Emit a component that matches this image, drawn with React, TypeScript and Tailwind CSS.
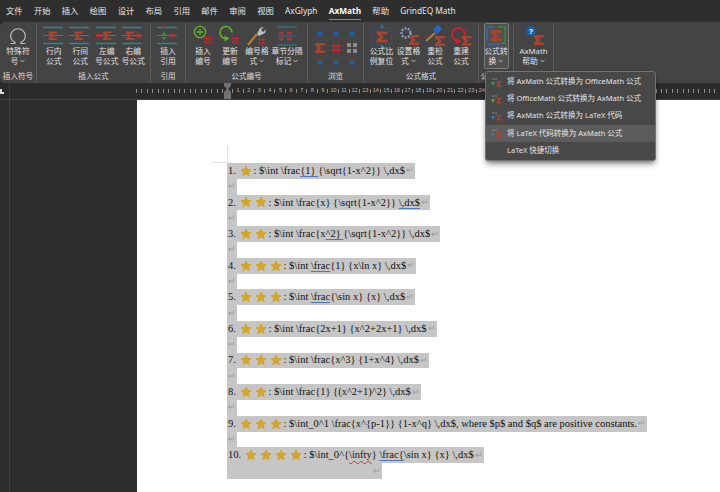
// AxMath ribbon in Word (dark theme) over a page of LaTeX exercise lines.
import type { ReactNode } from "react";

const cjk = "font-['Noto_Sans','Noto_Sans_CJK_SC',sans-serif]";

const tabs = ["文件", "开始", "插入", "绘图", "设计", "布局", "引用", "邮件", "审阅", "视图", "AxGlyph", "AxMath", "帮助", "GrindEQ Math"];

const Sigma = ({ x = 0, y = 0, s = 1, c = "#a8442f" }: { x?: number; y?: number; s?: number; c?: string }) => (
  <path
    transform={`translate(${x} ${y}) scale(${s})`}
    d="M0 0h10v2.4H4.2l2.6 2.6-2.6 2.6H10V10H0V8l3-3-3-3z"
    fill={c}
  />
);

const Hash = ({ x = 0, y = 0, s = 1, c = "#c8242c" }: { x?: number; y?: number; s?: number; c?: string }) => (
  <path
    transform={`translate(${x} ${y}) scale(${s})`}
    d="M3 0v10M7 0v10M0 3h10M0 7h10"
    stroke={c}
    strokeWidth="1.3"
    fill="none"
  />
);

const Frame = ({ children }: { children: ReactNode }) => (
  <svg width="24" height="26" viewBox="0 0 24 26" className="shrink-0">
    {children}
  </svg>
);

const Bars = () => (
  <>
    <path d="M1 3.5h20M1 19.5h20" stroke="#2b8596" strokeWidth="1.3" />
    <path d="M1 11.5h20" stroke="#3f8d9b" strokeWidth="0.8" />
  </>
);

const InlineIcon = () => (
  <Frame>
    <Bars />
    <Sigma x={6.5} y={7.5} s={0.85} />
  </Frame>
);
const LeftIcon = () => (
  <Frame>
    <Bars />
    <Hash x={1} y={8.5} s={0.6} />
    <Sigma x={8} y={7.5} s={0.85} />
  </Frame>
);
const RightIcon = () => (
  <Frame>
    <Bars />
    <Sigma x={5} y={7.5} s={0.85} />
    <Hash x={14.5} y={8.5} s={0.6} />
  </Frame>
);
const CiteIcon = () => (
  <Frame>
    <Bars />
    <path d="M5 11.5l3-4 3 4z" fill="#3f8a3a" />
    <path d="M5 13l3 3 3-3z" fill="#4b7f3a" />
    <circle cx="8" cy="2.6" r="1.4" fill="#b22b2b" />
    <Hash x={14} y={9} s={0.55} />
  </Frame>
);
const AddNoIcon = () => (
  <Frame>
    <circle cx="9" cy="8" r="5.6" fill="none" stroke="#5fb22d" strokeWidth="1.4" />
    <path d="M9 5v6M6 8h6" stroke="#5fb22d" strokeWidth="1.3" />
    <Hash x={13} y={12} s={0.85} />
  </Frame>
);
const UpdateNoIcon = () => (
  <Frame>
    <path d="M14 8.5a6 6 0 1 0-5.5 6" fill="none" stroke="#5fb22d" strokeWidth="1.6" />
    <path d="M6.5 11.5l5 3-5 3z" fill="#5fb22d" />
    <Hash x={13} y={12} s={0.85} />
  </Frame>
);
const WrenchIcon = () => (
  <Frame>
    <path d="M3 21L12 10" stroke="#b27a36" strokeWidth="2.4" />
    <path d="M12 10l3-6 4-1-3 3 2 2 3-3-1 4-6 3z" fill="#b9bec4" />
    <Hash x={12} y={13} s={0.85} />
  </Frame>
);
const ChapterIcon = () => (
  <Frame>
    <path d="M2 3h20M2 21h20" stroke="#2b8596" strokeWidth="1.2" />
    <path d="M4 7.5h5v3H4zM12 7.5h5v3h-5zM4 13.5h5v3H4zM12 13.5h5v3h-5z" fill="#a8323a" />
    <path d="M2 12h20" stroke="#2b8596" strokeWidth="0.7" />
  </Frame>
);
const ResetIcon = () => (
  <Frame>
    <path d="M2.5 4.5h19v16h-19z" fill="none" stroke="#2c5f8e" strokeWidth="0.8" strokeDasharray="2 2" />
    <path d="M12 0.5l2 3h-4zM12 24.5l-2-3h4z" fill="#2e78c4" />
    <Sigma x={6.5} y={7.5} s={1.1} />
  </Frame>
);
const GearIcon = () => (
  <Frame>
    <circle cx="9" cy="9" r="4.5" fill="none" stroke="#8aa3c4" strokeWidth="2.4" strokeDasharray="1.8 1.4" />
    <Sigma x={12} y={11} s={1} />
  </Frame>
);
const CheckIcon = () => (
  <Frame>
    <path d="M3 17L12 9" stroke="#b27a36" strokeWidth="2.2" />
    <path d="M10 6l5-5 4 4-5 5z" fill="#1f66d6" />
    <Sigma x={12} y={12} s={1} />
  </Frame>
);
const RebuildIcon = () => (
  <Frame>
    <path d="M16 11a6.5 6.5 0 1 0-6.5 6" fill="none" stroke="#d0232b" strokeWidth="1.8" />
    <path d="M6.5 14l6 3-6 3.5z" fill="#d0232b" />
    <Sigma x={13} y={12} s={0.95} />
  </Frame>
);
const ConvertIcon = () => (
  <Frame>
    <path d="M4 3h6M3 3v14" stroke="#2d6fb5" strokeWidth="1.4" fill="none" />
    <path d="M14 3h7v16h-4" stroke="#3d8a3a" strokeWidth="1.4" fill="none" />
    <path d="M4 20h12" stroke="#2d6fb5" strokeWidth="1.4" />
    <Sigma x={6.5} y={6} s={1.1} />
  </Frame>
);
const HelpIcon = () => (
  <Frame>
    <circle cx="9" cy="7" r="5" fill="#145fa8" />
    <text x="9" y="10" textAnchor="middle" fontSize="8" fontWeight="700" fill="#fff" fontFamily="Liberation Sans">?</text>
    <Sigma x={12} y={11} s={1} />
  </Frame>
);
const OmegaIcon = () => (
  <svg width="20" height="26" viewBox="0 0 20 26" className="shrink-0">
    <path
      d="M2.500 19.500H7v-1.300c-2.600-1-4.300-3.500-4.300-6.400 0-4 3.200-7 7.300-7s7.300 3 7.300 7c0 2.900-1.700 5.400-4.300 6.400v1.300h4.500"
      fill="none"
      stroke="#c4c4c4"
      strokeWidth="1.100"
    />
  </svg>
);

const Caret = () => (
  <svg width="5" height="4" viewBox="0 0 5 4" className="ml-[2px] inline-block align-middle">
    <path d="M0.5 0.8L2.5 3l2-2.2" fill="none" stroke="#d0d0d0" strokeWidth="0.8" />
  </svg>
);

function Btn({ w, icon, a, b, caret, active }: { w: number; icon: ReactNode; a: string; b: string; caret?: boolean; active?: boolean }) {
  return (
    <div
      style={{ width: w }}
      className={
        "flex h-[46px] shrink-0 flex-col items-center rounded-[2px] border " +
        (active ? "border-[#7b7b7b] bg-[#505050]" : "border-transparent")
      }
    >
      <div className="flex h-[23px] items-start justify-center">{icon}</div>
      <div className="whitespace-nowrap text-center text-[7.8px] leading-[9.5px] text-[#e2e2e2]">
        {a}
        <br />
        {b}
        {caret && <Caret />}
      </div>
    </div>
  );
}

function Group({ w, label, children }: { w: number; label: string; children: ReactNode }) {
  return (
    <div style={{ width: w }} className="flex shrink-0 flex-col border-r border-[#5c5c5c]">
      <div className="flex h-[47px] justify-center">{children}</div>
      <div className="mt-[1px] whitespace-nowrap text-center text-[7.6px] leading-[11px] text-[#dcdcdc]">{label}</div>
    </div>
  );
}

const Up = () => (
  <svg width="8" height="5" viewBox="0 0 8 5"><path d="M4 0l4 5H0z" fill="#1d5fa8" /></svg>
);
const Down = () => (
  <svg width="8" height="5" viewBox="0 0 8 5"><path d="M4 5L0 0h8z" fill="#1d5fa8" /></svg>
);

function Browse() {
  const cell = "flex h-[15.5px] w-[16px] items-center justify-center";
  return (
    <div className="mt-[1.5px] grid h-[44px] grid-cols-3">
      <div className={cell}><Up /></div>
      <div className={cell}><Up /></div>
      <div className={cell}><Up /></div>
      <div className={cell}>
        <svg width="10" height="10" viewBox="0 0 10 10"><Sigma /></svg>
      </div>
      <div className={cell}>
        <svg width="10" height="10" viewBox="0 0 10 10"><Hash /></svg>
      </div>
      <div className={cell}>
        <svg width="10" height="10" viewBox="0 0 10 10">
          <path d="M0 0h4v4H0zM6 0h4v4H6zM0 6h4v4H0zM6 6h4v4H6z" fill="#8c8c8c" />
        </svg>
      </div>
      <div className={cell}><Down /></div>
      <div className={cell}><Down /></div>
      <div className={cell}><Down /></div>
    </div>
  );
}

function Ruler() {
  return (
    <div className="flex h-[17px] shrink-0 items-stretch border-b border-[#3f3f3f] bg-[#2b2b2b]">
      <div className="relative w-[10px] shrink-0 border-r border-[#3f3f3f]">
        <span className="absolute left-[0px] top-[6px] h-[5px] w-[2px] bg-[#dcdcdc]" />
        <span className="absolute left-[0px] top-[9px] h-[2px] w-[4px] bg-[#dcdcdc]" />
      </div>
      <div className="flex w-[126px] shrink-0" />
      <div className="flex w-[88px] shrink-0 items-center justify-between pr-[1px]">
        {Array.from({ length: 17 }, (_, i) => (
          <span key={i} className="h-[4px] w-[1px] bg-[#8f8f8f]" />
        ))}
      </div>
      <svg width="7" height="16" viewBox="0 0 7 16" className="shrink-0">
        <path d="M0 0h7v3L4.500 5.500v1L7 9v7H0V9l2.500-2.500v-1L0 3z" fill="#707070" />
      </svg>
      <div className="flex min-w-0 flex-1 items-center overflow-hidden pl-[1px]">
        {Array.from({ length: 46 }, (_, i) => (
          <div key={i} className="flex w-[10.6px] shrink-0 items-center justify-between">
            <span className="h-[4px] w-[1px] bg-[#8f8f8f]" />
            {i < 39 ? (
              <span className="w-[9px] text-center font-['Liberation_Sans',sans-serif] text-[5.5px] leading-none text-[#b8b8b8]">{i + 1}</span>
            ) : (
              <span className="mr-[4px] h-[4px] w-[1px] bg-[#8f8f8f]" />
            )}
          </div>
        ))}
      </div>
    </div>
  );
}

const Star = () => (
  <svg width="12" height="12" viewBox="0 0 24 24" className="mx-[1.5px] shrink-0">
    <path
      d="M12 2l3 6.600 7 .8-5.200 4.800 1.500 7L12 17.600 5.700 21.200l1.500-7L2 9.400l7-.8z"
      fill="#d3a52a"
      stroke="#d3a52a"
      strokeWidth="2"
      strokeLinejoin="round"
    />
  </svg>
);

const Ret = () => <span className="ml-[1px] text-[9px] leading-none text-[#9a9a9a]">↵</span>;
const Blue = ({ children }: { children: ReactNode }) => (
  <span className="underline decoration-[#4f74c0] decoration-1 underline-offset-2">{children}</span>
);
const Red = ({ children }: { children: ReactNode }) => (
  <span className="underline decoration-[#d0342c] decoration-wavy decoration-1 underline-offset-2">{children}</span>
);

const Gap = () => (
  <div className="flex h-[15.8px] w-[10px] items-center bg-[#c6c6c6]">
    <Ret />
  </div>
);

function Line({ n, stars, children }: { n: string; stars: number; children: ReactNode }) {
  return (
    <div className="flex h-[15.8px] w-fit items-center whitespace-pre bg-[#c6c6c6] pl-[1px] pr-[1px] text-[#111]">
      {n}{" "}
      {Array.from({ length: stars }, (_, i) => (
        <Star key={i} />
      ))}
      {children}
      <Ret />
    </div>
  );
}

const lines: { n: string; stars: number; body: ReactNode }[] = [
  { n: "1.", stars: 1, body: <>{": $\\int \\frac"}<Blue>{"{1} "}</Blue>{"{\\sqrt{1-x^2}} \\,dx$"}</> },
  { n: "2.", stars: 2, body: <>{": $\\int \\frac{x} {\\sqrt{1-x^2}} "}<Blue>{"\\,dx$"}</Blue></> },
  { n: "3.", stars: 2, body: <>{": $\\int \\frac{x"}<Blue>{"^2} "}</Blue>{"{\\sqrt{1-x^2}} \\,dx$"}</> },
  { n: "4.", stars: 3, body: <>{": $\\int "}<Blue>{"\\frac"}</Blue>{"{1} {x\\ln x} \\,dx$"}</> },
  { n: "5.", stars: 3, body: <>{": $\\int "}<Blue>{"\\frac"}</Blue>{"{\\sin x} {x} \\,dx$"}</> },
  { n: "6.", stars: 2, body: <>{": $\\int \\frac{2x+1} {x^2+2x+1} \\,dx$"}</> },
  { n: "7.", stars: 3, body: <>{": $\\int \\frac{x^3} {1+x^4} \\,dx$"}</> },
  { n: "8.", stars: 2, body: <>{": $\\int \\frac{1} {(x^2+1)^2} \\,dx$"}</> },
  { n: "9.", stars: 3, body: <>{": $\\int_0^1 \\frac{x^{p-1}} {1-x^q} \\,dx$, where $p$ and $q$ are positive constants."}</> },
];

const menu = [
  { label: "将 AxMath 公式转换为 OfficeMath 公式", c: "#3d9a3a" },
  { label: "将 OfficeMath 公式转换为 AxMath 公式", c: "#5aa52f" },
  { label: "将 AxMath 公式转换为 LaTeX 代码", c: "#2e78c4" },
  { label: "将 LaTeX 代码转换为 AxMath 公式", c: "#2e78c4", on: true },
  { label: "LaTeX 快捷切换", c: "" },
];

export default function App() {
  return (
    <div className={`relative flex h-[492px] w-[720px] flex-col overflow-hidden bg-[#2e2e2e] ${cjk}`}>
      {/* tabs */}
      <div className="flex h-[22px] shrink-0 items-center gap-[11.3px] pl-[6px] text-[8.3px] text-[#e6e6e6]">
        {tabs.map((t) => (
          <span
            key={t}
            className={t === "AxMath" ? "relative font-bold text-white" : ""}
          >
            {t}
            {t === "AxMath" && <span className="absolute -bottom-[3px] left-0 right-0 h-[1.5px] bg-[#6d8ec4]" />}
          </span>
        ))}
      </div>

      {/* ribbon */}
      <div className="flex h-[61px] shrink-0 rounded-l-[5px] bg-[#444444] pt-[1px]">
        <Group w={37} label="插入符号">
          <Btn w={34} icon={<OmegaIcon />} a="特殊符" b="号" caret />
        </Group>
        <Group w={114} label="插入公式">
          <Btn w={26.5} icon={<InlineIcon />} a="行内" b="公式" />
          <Btn w={26.5} icon={<InlineIcon />} a="行间" b="公式" />
          <Btn w={26.5} icon={<LeftIcon />} a="左编" b="号公式" />
          <Btn w={26.5} icon={<RightIcon />} a="右编" b="号公式" />
        </Group>
        <Group w={35} label="引用">
          <Btn w={30} icon={<CiteIcon />} a="插入" b="引用" />
        </Group>
        <Group w={122} label="公式编号">
          <Btn w={27} icon={<AddNoIcon />} a="插入" b="编号" />
          <Btn w={27} icon={<UpdateNoIcon />} a="更新" b="编号" />
          <Btn w={27} icon={<WrenchIcon />} a="编号格" b="式" caret />
          <Btn w={33} icon={<ChapterIcon />} a="章节分隔" b="标记" caret />
        </Group>
        <Group w={56} label="浏览">
          <Browse />
        </Group>
        <Group w={115} label="公式格式">
          <Btn w={27} icon={<ResetIcon />} a="公式比" b="例复位" />
          <Btn w={27} icon={<GearIcon />} a="设置格" b="式" caret />
          <Btn w={26} icon={<CheckIcon />} a="重检" b="公式" />
          <Btn w={26} icon={<RebuildIcon />} a="重建" b="公式" />
        </Group>
        <Group w={35} label="公式转换">
          <Btn w={25} active icon={<ConvertIcon />} a="公式转" b="换" caret />
        </Group>
        <Group w={40} label="">
          <Btn w={34} icon={<HelpIcon />} a="AxMath" b="帮助" caret />
        </Group>
      </div>

      <Ruler />

      {/* workspace */}
      <div className="flex min-h-0 flex-1">
        <div className="w-[10px] shrink-0 border-r border-[#3f3f3f]" />
        <div className="w-[127px] shrink-0" />
        <div className="flex-1 bg-white">
          <div className="relative pl-[90px] pt-[63px] font-['Liberation_Serif',serif] text-[10.5px] leading-4">
            {/* crop mark */}
            <span className="absolute left-[76px] top-[62px] h-[1px] w-[14px] bg-[#dedede]" />
            <span className="absolute left-[90px] top-[46px] h-[16px] w-[1px] bg-[#dedede]" />
            {lines.map((l) => (
              <div key={l.n}>
                <Line n={l.n} stars={l.stars}>{l.body}</Line>
                <Gap />
              </div>
            ))}
            <div className="w-[155px] bg-[#c6c6c6]">
              <div className="flex h-[15.8px] w-max items-center whitespace-pre bg-[#c6c6c6] pl-[1px] pr-[1px] text-[#111]">
                {"10. "}
                <Star /><Star /><Star /><Star />
                {": $\\int_0^{"}<Red>{"\\infty"}</Red>{"} "}<Blue>{"\\frac{"}</Blue>{"\\sin x} {x} \\,dx$"}<Ret />
              </div>
              <div className="flex h-[15.8px] items-center justify-end pr-[1px]"><Ret /></div>
            </div>
          </div>
        </div>
      </div>

      {/* 公式转换 dropdown */}
      <div className="absolute left-[485px] top-[71px] w-[171px] rounded-[3px] border border-[#737373] bg-[#484848] py-[1px] shadow-md shadow-black/40">
        {menu.map((m) => (
          <div
            key={m.label}
            className={"flex h-[17.2px] items-center text-[7.5px] text-[#e6e6e6] " + (m.on ? "bg-[#5c5c5c]" : "")}
          >
            <div className="flex w-[21px] shrink-0 justify-center">
              {m.c && (
                <svg width="11" height="10" viewBox="0 0 11 10">
                  <circle cx="2" cy="2" r="0.8" fill="#9a9a9a" />
                  <circle cx="5" cy="2" r="0.8" fill="#9a9a9a" />
                  <path d="M0 5h4l-2 4z" fill={m.c} />
                  <Sigma x={5.5} y={4} s={0.55} />
                </svg>
              )}
            </div>
            <span className="whitespace-nowrap">{m.label}</span>
          </div>
        ))}
      </div>
    </div>
  );
}
